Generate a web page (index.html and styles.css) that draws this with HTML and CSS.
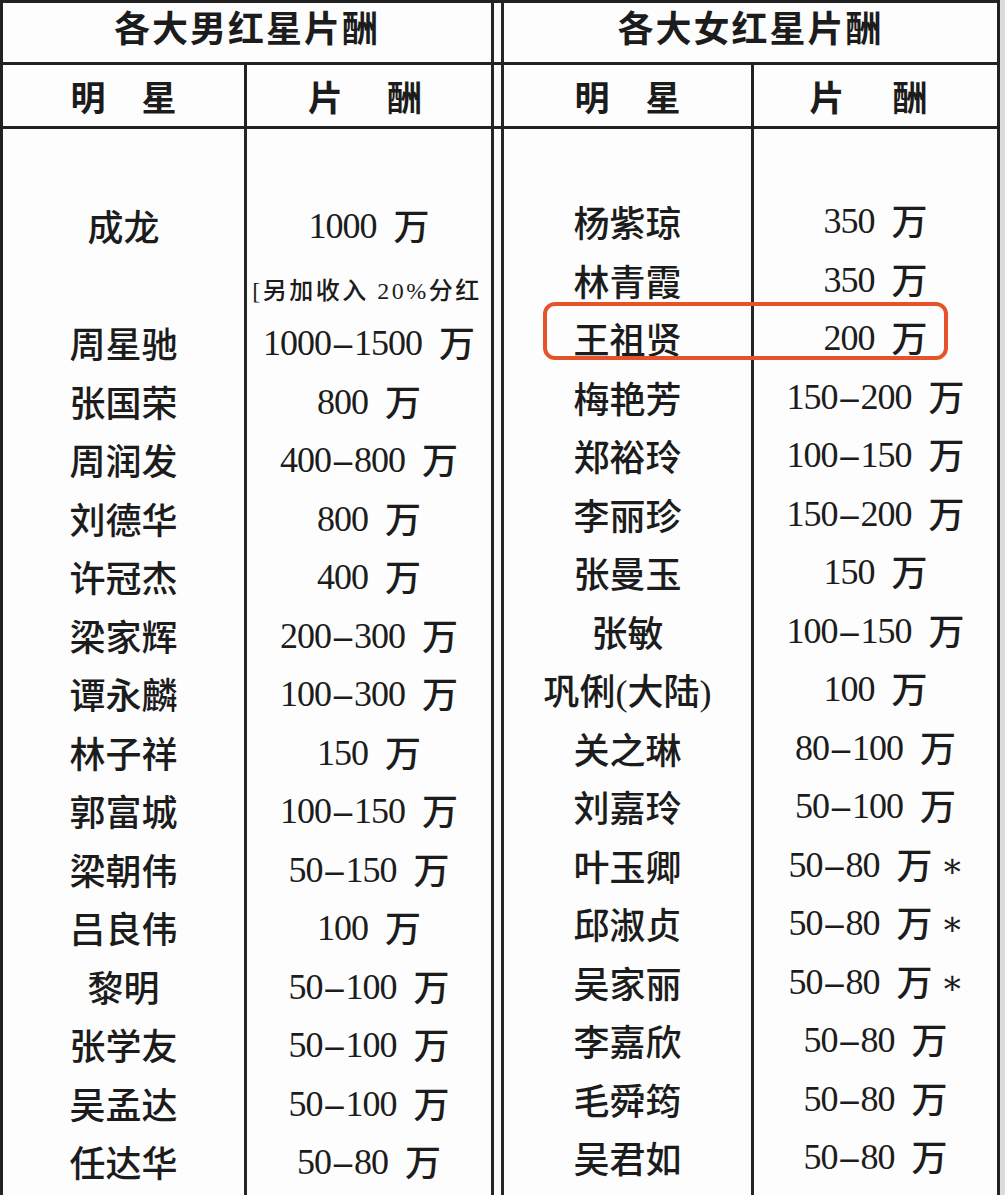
FILE: index.html
```html
<!DOCTYPE html>
<html lang="zh-CN">
<head>
<meta charset="utf-8">
<title>各大红星片酬</title>
<link rel="stylesheet" href="styles.css">
</head>
<body>
<div class="sheet">
  <section class="half left">
    <div class="title">各大男红星片酬</div>
    <div class="sub">
      <div class="sub-cell name"><span>明</span><span>星</span></div>
      <div class="sub-cell pay"><span>片</span><span>酬</span></div>
    </div>
    <div class="body">
      <div class="col names">
        <div class="row">成龙</div>
        <div class="row"></div>
        <div class="row">周星驰</div>
        <div class="row">张国荣</div>
        <div class="row">周润发</div>
        <div class="row">刘德华</div>
        <div class="row">许冠杰</div>
        <div class="row">梁家辉</div>
        <div class="row">谭永麟</div>
        <div class="row">林子祥</div>
        <div class="row">郭富城</div>
        <div class="row">梁朝伟</div>
        <div class="row">吕良伟</div>
        <div class="row">黎明</div>
        <div class="row">张学友</div>
        <div class="row">吴孟达</div>
        <div class="row">任达华</div>
      </div>
      <div class="col pays">
        <div class="row">1000<span class="w">万</span></div>
        <div class="row note">[另加收入 20%分红</div>
        <div class="row">1000<span class="d">–</span>1500<span class="w">万</span></div>
        <div class="row">800<span class="w">万</span></div>
        <div class="row">400<span class="d">–</span>800<span class="w">万</span></div>
        <div class="row">800<span class="w">万</span></div>
        <div class="row">400<span class="w">万</span></div>
        <div class="row">200<span class="d">–</span>300<span class="w">万</span></div>
        <div class="row">100<span class="d">–</span>300<span class="w">万</span></div>
        <div class="row">150<span class="w">万</span></div>
        <div class="row">100<span class="d">–</span>150<span class="w">万</span></div>
        <div class="row">50<span class="d">–</span>150<span class="w">万</span></div>
        <div class="row">100<span class="w">万</span></div>
        <div class="row">50<span class="d">–</span>100<span class="w">万</span></div>
        <div class="row">50<span class="d">–</span>100<span class="w">万</span></div>
        <div class="row">50<span class="d">–</span>100<span class="w">万</span></div>
        <div class="row">50<span class="d">–</span>80<span class="w">万</span></div>
      </div>
    </div>
  </section>
  <div class="sep"></div>
  <section class="half right">
    <div class="title">各大女红星片酬</div>
    <div class="sub">
      <div class="sub-cell name"><span>明</span><span>星</span></div>
      <div class="sub-cell pay"><span>片</span><span>酬</span></div>
    </div>
    <div class="body">
      <div class="col names">
        <div class="row">杨紫琼</div>
        <div class="row">林青霞</div>
        <div class="row">王祖贤</div>
        <div class="row">梅艳芳</div>
        <div class="row">郑裕玲</div>
        <div class="row">李丽珍</div>
        <div class="row">张曼玉</div>
        <div class="row">张敏</div>
        <div class="row">巩俐(大陆)</div>
        <div class="row">关之琳</div>
        <div class="row">刘嘉玲</div>
        <div class="row">叶玉卿</div>
        <div class="row">邱淑贞</div>
        <div class="row">吴家丽</div>
        <div class="row">李嘉欣</div>
        <div class="row">毛舜筠</div>
        <div class="row">吴君如</div>
      </div>
      <div class="col pays">
        <div class="row">350<span class="w">万</span></div>
        <div class="row">350<span class="w">万</span></div>
        <div class="row">200<span class="w">万</span></div>
        <div class="row">150<span class="d">–</span>200<span class="w">万</span></div>
        <div class="row">100<span class="d">–</span>150<span class="w">万</span></div>
        <div class="row">150<span class="d">–</span>200<span class="w">万</span></div>
        <div class="row">150<span class="w">万</span></div>
        <div class="row">100<span class="d">–</span>150<span class="w">万</span></div>
        <div class="row">100<span class="w">万</span></div>
        <div class="row">80<span class="d">–</span>100<span class="w">万</span></div>
        <div class="row">50<span class="d">–</span>100<span class="w">万</span></div>
        <div class="row">50<span class="d">–</span>80<span class="w">万</span><span class="star">∗</span></div>
        <div class="row">50<span class="d">–</span>80<span class="w">万</span><span class="star">∗</span></div>
        <div class="row">50<span class="d">–</span>80<span class="w">万</span><span class="star">∗</span></div>
        <div class="row">50<span class="d">–</span>80<span class="w">万</span></div>
        <div class="row">50<span class="d">–</span>80<span class="w">万</span></div>
        <div class="row">50<span class="d">–</span>80<span class="w">万</span></div>
      </div>
    </div>
    <div class="highlight"></div>
  </section>
</div>
</body>
</html>
```

FILE: styles.css
```css
html, body {
  margin: 0;
  padding: 0;
}
body {
  background: #dcdcdc;
  color: #1c1c1c;
  font-family: "Liberation Serif", "Noto Sans CJK SC", serif;
  overflow: hidden;
}
.sheet {
  width: 994px;
  height: 1230px;
  display: flex;
  background: #fdfdfd;
  border-top: 3px solid #222;
  border-left: 3px solid #222;
  border-right: 3px solid #222;
}
.half {
  display: flex;
  flex-direction: column;
  position: relative;
}
.half.left { width: 488px; }
.half.right { width: 493px; }
.sep {
  width: 7px;
  border-left: 3px solid #262626;
  border-right: 3px solid #262626;
  background:
    linear-gradient(#222, #222) 0 59px / 100% 3px no-repeat,
    linear-gradient(#222, #222) 0 123px / 100% 3px no-repeat;
}
.title {
  height: 62px;
  box-sizing: border-box;
  border-bottom: 3px solid #222;
  display: flex;
  align-items: center;
  justify-content: center;
  padding-bottom: 13px;
  font-family: "Noto Sans CJK SC", sans-serif;
  font-weight: 700;
  font-size: 36px;
  letter-spacing: 2px;
}
.sub {
  height: 64px;
  border-bottom: 3px solid #222;
  box-sizing: border-box;
  display: flex;
}
.sub-cell {
  display: flex;
  align-items: center;
  justify-content: center;
  gap: 36px;
  font-family: "Noto Sans CJK SC", sans-serif;
  font-weight: 700;
  font-size: 35px;
}
.sub-cell.name { width: 241px; }
.right .sub-cell.name { width: 247px; }
.sub-cell.pay {
  flex: 1;
  border-left: 3px solid #222;
}
.left .sub-cell.pay { gap: 44px; padding-right: 8px; }
.right .sub-cell.pay { gap: 48px; padding-right: 14px; }
.body {
  flex: 1;
  display: flex;
}
.col {
  display: flex;
  flex-direction: column;
}
.left .col.names { width: 241px; padding-top: 71px; }
.right .col.names { width: 247px; padding-top: 67px; }
.col.pays {
  flex: 1;
  border-left: 3px solid #262626;
}
.left .col.pays { padding-top: 68px; }
.right .col.pays { padding-top: 63px; }
.row {
  height: 58.5px;
  line-height: 58.5px;
  flex: none;
  text-align: center;
  white-space: nowrap;
  font-size: 36px;
  font-weight: 500;
  letter-spacing: -1px;
}
.names .row {
  letter-spacing: 0;
}
.w {
  font-family: "Noto Sans CJK SC", sans-serif;
  margin-left: 17px;
  letter-spacing: 0;
  line-height: 1;
  vertical-align: -2px;
}
.d {
  margin: 0 3px;
  font-weight: 700;
}
.star {
  margin-left: 8px;
  font-family: "DejaVu Serif", serif;
  font-size: 34px;
  line-height: 1;
  vertical-align: 0;
}
.row.note {
  font-size: 24px;
  letter-spacing: 2.5px;
  margin-left: -4px;
  line-height: 70px;
}
.highlight {
  position: absolute;
  left: 39px;
  top: 299px;
  width: 405px;
  height: 58px;
  box-sizing: border-box;
  border: 4px solid #e5532b;
  border-radius: 12px;
}
```
